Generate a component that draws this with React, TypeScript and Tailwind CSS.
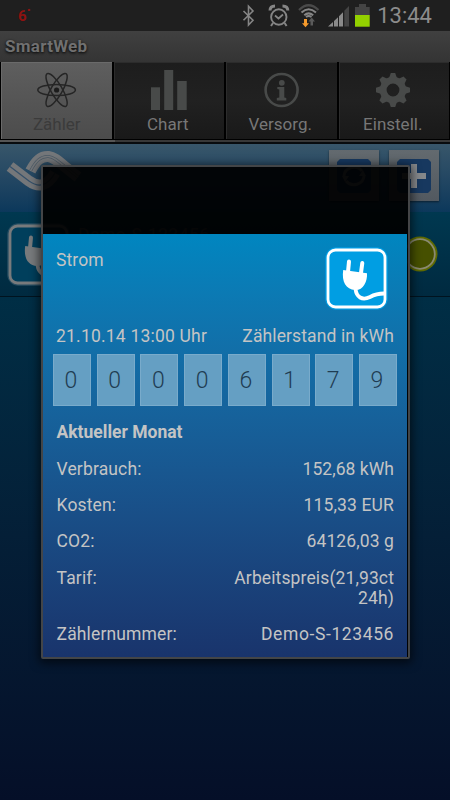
import type { ReactNode } from 'react';

interface Tab {
  label: string;
  icon: ReactNode;
  active?: boolean;
}

const teeth = [0, 45, 90, 135, 180, 225, 270, 315];

const tabs: Tab[] = [
  {
    label: 'Zähler',
    active: true,
    icon: (
      <svg viewBox="0 0 40 40" className="w-10 h-10" fill="none" stroke="#252525" strokeWidth="1.5">
        <ellipse cx="19.6" cy="20" rx="18.8" ry="5.6" />
        <ellipse cx="19.6" cy="20" rx="18.8" ry="5.6" transform="rotate(60 19.6 20)" />
        <ellipse cx="19.6" cy="20" rx="18.8" ry="5.6" transform="rotate(120 19.6 20)" />
        <circle cx="19.6" cy="20" r="2.6" fill="#1c1c1c" stroke="none" />
      </svg>
    ),
  },
  {
    label: 'Chart',
    icon: (
      <svg viewBox="0 0 40 40" className="w-10 h-10" fill="#484a49">
        <rect x="2" y="17.3" width="9" height="22.7" />
        <rect x="15.2" y="0" width="9" height="40" />
        <rect x="28.2" y="11" width="9.5" height="29" />
      </svg>
    ),
  },
  {
    label: 'Versorg.',
    icon: (
      <svg viewBox="0 0 40 40" className="w-10 h-10" fill="#484a49">
        <circle cx="19.6" cy="20" r="16" fill="none" stroke="#484a49" strokeWidth="2.6" />
        <circle cx="19.8" cy="12.8" r="2.9" />
        <path d="M15.3 17H22.3V27.5L24.3 28V30.5H14.8V28L17.3 27.5V19.5L15.3 19Z" />
      </svg>
    ),
  },
  {
    label: 'Einstell.',
    icon: (
      <svg viewBox="0 0 40 40" className="w-10 h-10" fill="#484a49">
        <circle cx="19" cy="20" r="9.8" fill="none" stroke="#484a49" strokeWidth="6.8" />
        {teeth.map((angle) => (
          <path key={angle} d="M14.7 9L16.8 3H21.2L23.3 9Z" transform={`rotate(${angle} 19 20)`} />
        ))}
      </svg>
    ),
  },
];

const digits = ['0', '0', '0', '0', '6', '1', '7', '9'];

const rows = [
  { label: 'Verbrauch:', value: '152,68 kWh', tracking: 'tracking-[0.05px]' },
  { label: 'Kosten:', value: '115,33 EUR', tracking: 'tracking-[0.15px]' },
  { label: 'CO2:', value: '64126,03 g', tracking: 'tracking-[0.1px]' },
  { label: 'Tarif:', value: 'Arbeitspreis(21,93ct 24h)', tracking: 'tracking-[0.12px]' },
  { label: 'Zählernummer:', value: 'Demo-S-123456', tracking: 'tracking-[0.6px]' },
];

function PlugIcon({ stroke, fill, glow }: { stroke: string; fill: string; glow: string }) {
  return (
    <svg viewBox="0 0 63 63" className="h-[63px] w-[63px] shrink-0">
      <rect x="1.5" y="1.5" width="60" height="60" rx="10" fill="none" stroke={glow} strokeWidth="2.5" opacity="0.8" />
      <rect x="3" y="3" width="57" height="57" rx="7.5" fill={fill} stroke={stroke} strokeWidth="2.8" />
      <path d="M24 14.5L23 25M37.3 16L36 26" stroke={stroke} strokeWidth="4" strokeLinecap="round" />
      <path d="M18.2 23L42 26.2C42.5 35 38 43.5 30 43C21 42.5 16.5 35 18.2 23Z" fill={stroke} />
      <path d="M30.5 42C31.5 50 37 54 45 50C50 47.3 53 46.5 59 46.5" fill="none" stroke={stroke} strokeWidth="3.8" />
    </svg>
  );
}

function StatusBar() {
  return (
    <div className="flex h-[31px] shrink-0 items-center justify-between bg-[#1f1f1f] px-[18px]">
      <span className="text-[15px] font-bold text-[#8f1210]">
        6<span className="text-[17px]">˙</span>
      </span>
      <div className="flex items-center gap-[5px]">
        <svg viewBox="240 0 132 31" className="h-[31px] w-[132px]" fill="none" stroke="#858585">
          <path d="M243.5 11L253 20.3L248.5 25V6.2L253 11L243.5 20.3" strokeWidth="1.6" />
          {/* alarm */}
          <circle cx="278.8" cy="17" r="7.7" strokeWidth="1.9" />
          <path d="M275 15.5L278.5 18.5L283 14.5" strokeWidth="1.7" />
          <path d="M270 10.5C270 7.5 272 6 275 6M282.5 6C285.5 6 287.8 7.5 287.8 10.5" strokeWidth="3" />
          <path d="M273 23L271 26M284.6 23L286.6 26" strokeWidth="2" />
          {/* wifi */}
          <path d="M299 10Q308.5 0.5 318.5 10" stroke="#4a4a4a" strokeWidth="2.2" />
          <path d="M301.5 12.5Q308.5 6 316 12.5M304.3 15.2Q308.5 11.5 313.2 15.2" strokeWidth="2" />
          <path d="M306 17Q308.7 15 311.5 17" strokeWidth="1.8" />
          <path d="M304 19H307V23.3H309L305.5 27.3L302 23.3H304Z" fill="#f59a2c" stroke="none" />
          <path d="M310.5 25.5H313V21.5H315L311.7 17.5L308.5 21.5H310.5Z" fill="#5a5a5a" stroke="none" />
          {/* signal */}
          <path d="M328 26.5L333 22V26.5ZM334 26.5V21L338 17.3V26.5ZM339 26.5V16.3L343 12.3V26.5Z" fill="#8a8a8a" stroke="none" />
          <path d="M344.3 26.5V10.8L349 6V26.5Z" fill="#444" stroke="none" />
          {/* battery */}
          <path d="M359 4H366V7H369.7V15H355V7H359Z" fill="#444" stroke="none" />
          <rect x="355" y="15" width="14.7" height="11.7" fill="#93d100" stroke="none" />
        </svg>
        <span className="text-[22px] text-[#8c8c8c]">13:44</span>
      </div>
    </div>
  );
}

function Logo() {
  const back = 'M30.5 171C36 160.5 41 156 48.5 156.5C56 157.5 60 163.5 78 177';
  const front = 'M10 166.5L29 181C38 187.5 47 187 55 173';
  return (
    <svg viewBox="4 148 80 48" className="h-12 w-20" fill="none">
      <path d={back} stroke="#74777a" strokeWidth="11" />
      <path d={back} stroke="#4c5a66" strokeWidth="3" />
      <path d={back} stroke="#74777a" strokeWidth="1.6" />
      <path d={front} stroke="#74777a" strokeWidth="11" />
      <path d={front} stroke="#34506a" strokeWidth="1.2" />
    </svg>
  );
}

function HeaderButton({ children }: { children: ReactNode }) {
  return (
    <div className="flex h-[51px] w-[50px] items-center justify-center bg-linear-to-b from-[#636a6f] to-[#525960] shadow-[0_1px_2px_#00000080]">
      <svg viewBox="0 0 34 34" className="h-[34px] w-[34px]" fill="none" stroke="#85888b">
        <path d="M3 0H31L34 3V31L31 34H3L0 31V3Z" fill="#17385f" stroke="none" />
        {children}
      </svg>
    </div>
  );
}

export default function App() {
  return (
    <div className="relative flex h-[800px] w-[450px] flex-col overflow-hidden bg-black font-['Roboto',sans-serif]">
      <StatusBar />
      <div className="flex h-[31px] shrink-0 items-center bg-linear-to-b from-[#404040] to-[#343434] pl-[5px]">
        <span className="text-[17px] font-bold tracking-[0.3px] text-[#707070] [text-shadow:0_1px_3px_#000]">SmartWeb</span>
      </div>

      <div className="grid h-[78px] shrink-0 grid-cols-4 bg-black">
        {tabs.map((tab) => (
          <div key={tab.label} className="px-px">
            <div
              className={`flex h-[76.5px] flex-col items-center border-l border-t pt-[7px] ${
                tab.active
                  ? 'border-[#6a6a6a] bg-linear-to-b from-[#5e5e5e] to-[#4c4c4c]'
                  : 'border-[#2c2c2c] bg-linear-to-b from-[#1d1d1d] via-[#212121] to-[#191919]'
              }`}
            >
              {tab.icon}
              <span className={`mt-px text-[17px] leading-[26px] ${tab.active ? 'text-[#3b3b3b]' : 'pr-[3px] text-[#777]'}`}>
                {tab.label}
              </span>
            </div>
          </div>
        ))}
      </div>
      <div className="flex h-0.5 shrink-0 bg-[#383838]">
        <div className="w-[115px] bg-[#555]" />
      </div>
      <div className="h-0.5 shrink-0 bg-[#080b0e]" />

      <div className="flex h-[68px] shrink-0 items-start justify-between bg-linear-to-b from-[#38566a] to-[#0b385b] pl-1 pr-[11px]">
        <div className="pt-1">
          <Logo />
        </div>
        <div className="flex gap-2.5 pt-1.5">
          <HeaderButton>
            <path d="M7 17A10 9 0 0 1 25 12M27 17A10 9 0 0 1 9 22" strokeWidth="3" />
            <path d="M29 17H22L26 11ZM5 17H12L8 23Z" fill="#85888b" stroke="none" />
          </HeaderButton>
          <HeaderButton>
            <path d="M17 5V29M5 17H29" strokeWidth="6" />
          </HeaderButton>
        </div>
      </div>

      <div className="flex h-[85px] shrink-0 items-center justify-between border-b border-[#00131f] bg-linear-to-b from-[#003850] to-[#002a40] pl-[7px] pr-[12px]">
        <div className="flex items-center gap-2">
          <PlugIcon stroke="#777a7c" fill="#003f5c" glow="#2f5569" />
          <span className="pb-[37px] text-[17.5px] tracking-[0.5px] text-[#5a5a5a]">Demo-S-123456</span>
        </div>
        <svg viewBox="0 0 36 36" className="h-9 w-9">
          <circle cx="18" cy="18" r="17.5" fill="#5e6a00" />
          <circle cx="18" cy="18" r="14.8" fill="#465000" stroke="#8a8a72" strokeWidth="1.8" />
        </svg>
      </div>
      <div className="flex-1 bg-linear-to-b from-[#002e45] to-[#050f28]" />

      <div className="absolute left-[41px] top-[165px] flex h-[494px] w-[369px] flex-col rounded-[2px] border-2 border-[#434547] bg-black/93 shadow-[0_2px_10px_2px_#00000099]">
        <div className="h-[67px] shrink-0" />
        <div className="mr-px flex flex-1 flex-col bg-linear-to-b from-[#0086c0] to-[#19346c] text-[17.5px] leading-5 text-[#c4c4c4]">
          <div className="flex h-[92px] shrink-0 justify-between pl-[13px] pr-[19px] pt-[13px]">
            <span className="pt-[3px] tracking-[0.1px]">Strom</span>
            <PlugIcon stroke="#fff" fill="#009ee3" glow="#00a4ee" />
          </div>
          <div className="flex justify-between pl-[13px] pr-[13px]">
            <span className="tracking-[0.2px]">21.10.14 13:00 Uhr</span>
            <span className="tracking-[0.12px]">Zählerstand in kWh</span>
          </div>
          <div className="mt-2 flex justify-between pl-2.5 pr-2.5">
            {digits.map((digit, i) => (
              <div
                key={i}
                className="flex h-[52px] w-[38px] items-center justify-center border border-[#79abcb] bg-[#659fc3] pt-0.5 pr-0.5 text-[23px] font-light text-[#1f3c52]"
              >
                {digit}
              </div>
            ))}
          </div>
          <div className="flex flex-col gap-[16.3px] pl-[13.5px] pr-[13px] pt-[16.4px]">
            <span className="font-bold">Aktueller Monat</span>
            {rows.map((row) => (
              <div key={row.label} className="flex justify-between">
                <span className="tracking-[0.15px]">{row.label}</span>
                <span className={`max-w-[172px] text-right ${row.tracking}`}>{row.value}</span>
              </div>
            ))}
          </div>
        </div>
      </div>
    </div>
  );
}
